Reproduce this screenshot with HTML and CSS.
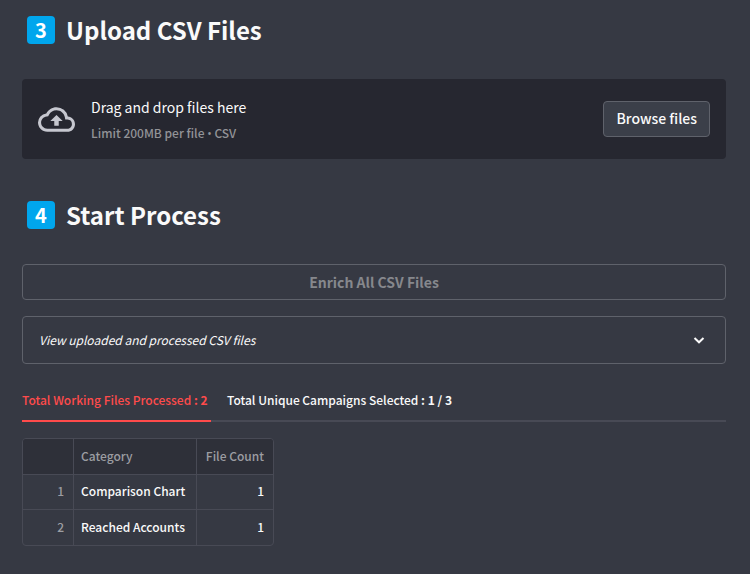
FILE: index.html
```html
<!DOCTYPE html>
<html lang="en">
<head>
<meta charset="utf-8">
<title>Upload CSV Files</title>
<link rel="stylesheet" href="styles.css">
</head>
<body>
<main class="page">
  <h2 class="step"><span class="keycap">3</span>Upload CSV Files</h2>

  <section class="dropzone">
    <svg class="cloud" viewBox="0 0 24 24" aria-hidden="true"><path d="M19.35 10.04A7.49 7.49 0 0012 4C9.11 4 6.6 5.64 5.35 8.04A5.994 5.994 0 000 14c0 3.31 2.69 6 6 6h13c2.76 0 5-2.24 5-5 0-2.64-2.05-4.78-4.65-4.96zM19 18H6c-2.21 0-4-1.79-4-4 0-2.05 1.53-3.76 3.56-3.97l1.07-.11.5-.95A5.469 5.469 0 0112 6c2.62 0 4.88 1.86 5.39 4.43l.3 1.5 1.53.11A2.98 2.98 0 0122 15c0 1.65-1.35 3-3 3zM8 13h2.55v3h2.9v-3H16l-4-4z"/></svg>
    <div class="drop-text">
      <span class="drop-title">Drag and drop files here</span>
      <small class="drop-limit">Limit 200MB per file <span class="bullet">•</span> CSV</small>
    </div>
    <button class="browse" type="button">Browse files</button>
  </section>

  <h2 class="step"><span class="keycap">4</span>Start Process</h2>

  <button class="enrich" type="button" disabled>Enrich All CSV Files</button>

  <details class="expander">
    <summary>
      <em>View uploaded and processed CSV files</em>
      <svg class="chevron" viewBox="0 0 12 12" aria-hidden="true"><path d="M1.5 4L6 8.300 10.500 4"/></svg>
    </summary>
  </details>

  <div class="tabs" role="tablist">
    <button class="tab active" type="button" role="tab" aria-selected="true">Total Working Files Processed <b>: 2</b></button>
    <button class="tab" type="button" role="tab" aria-selected="false">Total Unique Campaigns Selected <b>: 1 / 3</b></button>
  </div>

  <table class="grid">
    <thead>
      <tr><th class="index"></th><th class="category">Category</th><th class="num">File Count</th></tr>
    </thead>
    <tbody>
      <tr><th class="index">1</th><td>Comparison Chart</td><td class="num">1</td></tr>
      <tr><th class="index">2</th><td>Reached Accounts</td><td class="num">1</td></tr>
    </tbody>
  </table>
</main>
</body>
</html>
```
FILE: styles.css
```css
* {
  box-sizing: border-box;
}

body {
  margin: 0;
  background: #363943;
  color: #fafafa;
  font: 12px/20px "Source Sans Pro", "Noto Sans CJK SC", "Open Sans", sans-serif;
}

button {
  font: inherit;
  color: inherit;
}

.page {
  display: flex;
  flex-direction: column;
  padding: 12px 24px 24px 22px;
}

.step {
  display: flex;
  align-items: center;
  gap: 11px;
  height: 36px;
  margin: 0;
  padding-left: 5px;
  font-size: 24px;
  line-height: 36px;
  font-weight: 700;
}

.keycap {
  width: 28px;
  height: 28px;
  border-radius: 4px;
  background: #00a6ed;
  color: #fff;
  font-size: 20px;
  line-height: 28px;
  font-weight: 700;
  text-align: center;
}

.dropzone {
  display: flex;
  align-items: center;
  gap: 16px;
  min-height: 80px;
  margin: 31px 0 38px;
  padding: 16px;
  border-radius: 4px;
  background: #262730;
}

.cloud {
  width: 37px;
  height: 37px;
  fill: #c6c7cf;
}

.drop-text {
  display: flex;
  flex: 1;
  flex-direction: column;
  gap: 4px;
}

.drop-title {
  font-size: 14px;
  line-height: 24px;
}

.drop-limit {
  font-size: 12px;
  font-weight: 500;
  color: #929397;
}

.bullet {
  font-family: "Open Sans", sans-serif;
  line-height: 12px;
}

.browse {
  height: 36px;
  padding: 0 12px 2px;
  border: 1px solid #5f626b;
  border-radius: 4px;
  background: #3b3f49;
  font-size: 14px;
  font-weight: 500;
}

.enrich {
  height: 36px;
  margin-top: 31px;
  padding-bottom: 2px;
  border: 1px solid #5f626b;
  border-radius: 4px;
  background: transparent;
  color: #86888d;
  font-size: 14px;
  font-weight: 700;
}

.expander {
  margin-top: 16px;
  border: 1px solid #5f626b;
  border-radius: 4px;
}

.expander summary {
  display: flex;
  align-items: center;
  justify-content: space-between;
  height: 46px;
  padding: 0 20px 0 16px;
  list-style: none;
}

.chevron {
  width: 12px;
  height: 12px;
  fill: none;
  stroke: #fafafa;
  stroke-width: 2;
}

.tabs {
  display: flex;
  gap: 16px;
  margin-top: 16px;
  box-shadow: inset 0 -2px #484a55;
}

.tab {
  min-width: 189px;
  height: 42px;
  padding: 0;
  border: 0;
  border-bottom: 2px solid transparent;
  background: none;
  font-weight: 500;
  text-align: left;
}

.tab.active {
  color: #ff4b4b;
  border-bottom-color: #ff4b4b;
}

.grid {
  align-self: flex-start;
  margin-top: 16px;
  border: 1px solid #484a55;
  border-radius: 4px;
  border-spacing: 0;
  overflow: hidden;
}

.grid th,
.grid td {
  height: 35px;
  padding: 0 7px 2px;
  border-top: 1px solid #484a55;
  border-left: 1px solid #484a55;
  font-weight: 500;
  text-align: left;
}

.grid th {
  color: #9c9da2;
}

.grid thead th {
  border-top: 0;
  background: #2e3039;
}

.grid tbody tr:last-child > * {
  height: 36px;
}

.grid tr > :first-child {
  border-left: 0;
}

.grid .index {
  width: 50px;
  padding-right: 9px;
  text-align: right;
}

.grid .category {
  width: 123px;
}

.grid .num {
  width: 77px;
  padding-right: 9px;
  text-align: right;
}
```
